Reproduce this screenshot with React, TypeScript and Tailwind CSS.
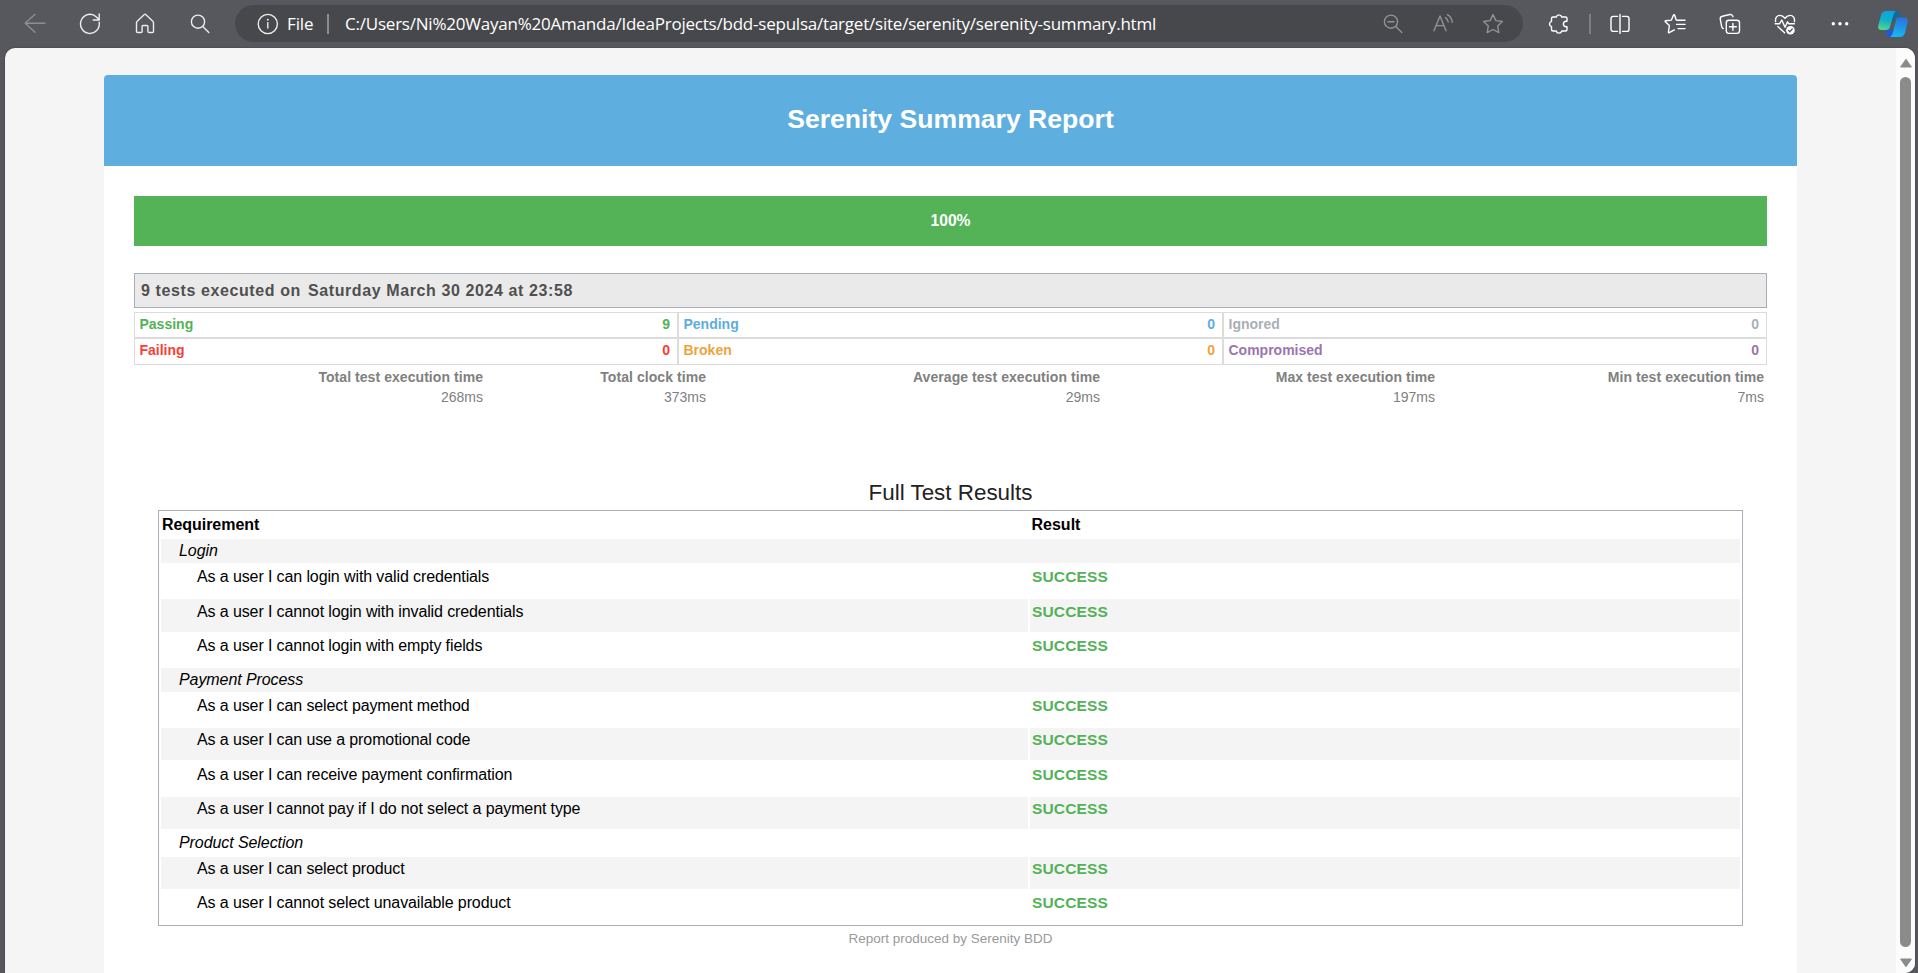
import React from "react";

const ARIAL = "font-['Liberation_Sans',Arial,sans-serif]";

function Icon({ children, className = "" }: { children: React.ReactNode; className?: string }) {
  return (
    <svg
      viewBox="0 0 24 24"
      fill="none"
      stroke="currentColor"
      strokeWidth="1.4"
      strokeLinecap="round"
      strokeLinejoin="round"
      className={`size-6 shrink-0 ${className}`}
    >
      {children}
    </svg>
  );
}

function Toolbar() {
  return (
    <div className="flex h-12 items-center text-[#ececec]">
      <div className="ml-[7px] flex w-[228px] shrink-0 gap-[31px] pl-4">
        <Icon className="text-[#8d8e91]">
          <path d="M22 11.3H2.2M12 2.3l-9.8 9 9.8 9" />
        </Icon>
        <Icon>
          <path d="M21.2 10.2A9.4 9.6 0 1 1 18.4 4.9L21 7.6M21.2 2v6h-6" />
        </Icon>
        <Icon>
          <path d="M11.3 2.6 4.2 9.2a2 2 0 0 0-.7 1.5v8.8a1 1 0 0 0 1 1h3.6a1 1 0 0 0 1-1v-5a1 1 0 0 1 1-1h3.8a1 1 0 0 1 1 1v5a1 1 0 0 0 1 1h3.6a1 1 0 0 0 1-1v-8.8a2 2 0 0 0-.7-1.5L12.7 2.6a1 1 0 0 0-1.4 0Z" />
        </Icon>
        <Icon>
          <circle cx="10" cy="9.7" r="6.6" />
          <path d="m14.8 14.4 6 6" />
        </Icon>
      </div>

      <div className="mb-px flex h-[37px] w-[1288px] shrink-0 items-center rounded-full bg-[#47484b]">
        <Icon className="mt-px ml-[21px]">
          <circle cx="11.8" cy="12" r="9.6" />
          <path d="M11.8 10.6v5.4" />
          <path d="M11.8 7.6v.2" strokeWidth="1.8" />
        </Icon>
        <span className="ml-[7px] w-[40px] font-['Open_Sans','Noto_Sans',sans-serif] text-[17px] leading-6 tracking-[-0.1px] text-white">
          File
        </span>
        <span className="h-5 w-[2px] bg-[#8b8c8e]" />
        <span className="ml-[16px] font-['Open_Sans','Noto_Sans',sans-serif] text-[17px] leading-6 tracking-[-0.22px] whitespace-nowrap text-white">
          C:/Users/Ni%20Wayan%20Amanda/IdeaProjects/bdd-sepulsa/target/site/serenity/serenity-summary.html
        </span>
        <div className="mt-px mr-[18px] ml-auto flex gap-[26px] text-[#919294]">
          <Icon>
            <circle cx="10" cy="9.7" r="6.6" />
            <path d="m14.8 14.4 6 6M7 9.7h6" />
          </Icon>
          <Icon>
            <path d="M3 18.8 9 4l6 14.8M5.2 13.6h7.6M14.4 5.6c1.6 1 2.6 2.5 2.8 4.4M16.4 2.6c2.8 1.6 4.600 4.2 4.8 7.6" />
          </Icon>
          <Icon>
            <path d="m12 2.6 2.9 6 6.5.9-4.7 4.6 1.1 6.5-5.8-3.1-5.8 3.1 1.1-6.5-4.7-4.6 6.5-.9Z" />
          </Icon>
        </div>
      </div>

      <Icon className="ml-[24px] text-white">
        <path d="M6 5h3.2a2.9 2.9 0 0 1 5.6 0H18.5a1.5 1.5 0 0 1 1.5 1.5V9.2h-.8a2.8 2.8 0 0 0 0 5.6H20v2.7a1.5 1.5 0 0 1-1.5 1.5H14.8a2.9 2.9 0 0 1-5.6 0H6a1.5 1.5 0 0 1-1.5-1.5V14.6a2.7 2.7 0 0 1 0-5.2V6.500A1.5 1.5 0 0 1 6 5Z" />
      </Icon>
      <span className="ml-[18px] h-5 w-[2px] shrink-0 bg-[#7d7e82]" />
      <div className="ml-[17px] flex gap-[31px] text-white">
        <Icon>
          <path d="M9.5 4.4H5.2A2.2 2.2 0 0 0 3 6.6v10.6a2.2 2.2 0 0 0 2.2 2.2h4.3M14.5 4.4h4.3A2.2 2.2 0 0 1 21 6.6v10.6a2.2 2.2 0 0 1-2.2 2.2h-4.3M12 2.4v19" />
        </Icon>
        <Icon>
          <path d="M14.6 8.4 13.2 8 11.6 3a.6.6 0 0 0-1.1 0L8.4 8.1l-5.8.6a.6.6 0 0 0-.3 1L6.4 13.6l-1 6.4a.6.6 0 0 0 .9.6l5-2.7M15 8.2h7M13.6 12.4H22M15 16.6h7" />
        </Icon>
        <Icon>
          <rect x="8.3" y="8.2" width="13.2" height="13.2" rx="2.6" />
          <path d="M14.9 11.4v6.8M11.5 14.8h6.8M5.2 16.6a2.6 2.6 0 0 1-1.500-1.9L2.3 7.3A2.6 2.6 0 0 1 4.4 4.3l7.4-1.8a2.6 2.6 0 0 1 3.1 2.3" />
        </Icon>
        <Icon>
          <path d="M2.6 9.6C1.9 6 4 3.4 6.9 3.4c2.2 0 3.7 1 5.1 2.8 1.4-1.8 2.9-2.8 5.1-2.8 2.9 0 5 2.6 4.3 6.2M2.2 11.8h4.3l2.3-3.8 3.2 7.2 2.5-5.4 1.3 2h5.6M4.8 14.6l6.8 6.2" />
          <circle cx="17.4" cy="18.2" r="4.3" fill="currentColor" stroke="none" />
          <path d="m15.5 18.4 1.3 1.3 2.5-2.7" stroke="#55565b" strokeWidth="1.3" />
        </Icon>
        <Icon>
          <g fill="currentColor" stroke="none">
            <circle cx="5.3" cy="11.8" r="1.7" />
            <circle cx="12" cy="11.8" r="1.7" />
            <circle cx="18.7" cy="11.8" r="1.7" />
          </g>
        </Icon>
      </div>
      <svg viewBox="0 0 30 28" className="ml-[26px] h-[28px] w-[30px] shrink-0">
        <defs>
          <linearGradient id="ribbonLeft" x1="0.5" y1="0" x2="0.3" y2="1">
            <stop offset="0" stopColor="#0ba4e0" />
            <stop offset="0.5" stopColor="#12b0c8" />
            <stop offset="1" stopColor="#55d88a" />
          </linearGradient>
          <linearGradient id="ribbonRight" x1="0.6" y1="0" x2="0.4" y2="1">
            <stop offset="0" stopColor="#2a73dc" />
            <stop offset="1" stopColor="#14b9f5" />
          </linearGradient>
        </defs>
        <path d="M14 1h4.5c2 0 2.8 1.2 3.3 2.8L22.8 7H20c-2.2 0-3.2 1.4-3.8 3.4L14 12Z" fill="#0b6c9c" />
        <path d="M7.8 20h6.4l1.2-2-1.4 6.800c-.3 1.2-.8 2-2 2-2.2 0-3-1.2-3.5-2.9Z" fill="#2157dc" />
        <path d="M8.8 1h9.4c-1.6.6-2.3 2-2.8 3.8l-3.3 11.6c-.7 2.3-1.7 3.6-4.3 3.6H3C.5 20-.3 18.2.3 15.6L3 5.2C3.8 2.4 5.6 1 8.8 1Z" fill="url(#ribbonLeft)" />
        <path d="M21.2 7.6h5.6c2.6 0 3.5 1.8 2.8 4.5L27 22.7c-.8 2.8-2.6 4.2-5.5 4.2H12c1.5-.6 2.2-2 2.7-3.8l3-11.5c.6-2.5 1.4-4 3.5-4Z" fill="url(#ribbonRight)" />
      </svg>
    </div>
  );
}

const summary = [
  { label: "Passing", value: 9, color: "text-[#53b257]" },
  { label: "Pending", value: 0, color: "text-[#5eade0]" },
  { label: "Ignored", value: 0, color: "text-[#a9afb7]" },
  { label: "Failing", value: 0, color: "text-[#f93e36]" },
  { label: "Broken", value: 0, color: "text-[#eea33d]" },
  { label: "Compromised", value: 0, color: "text-[#9b76ae]" },
];

const timings = [
  { label: "Total test execution time", value: "268ms", width: "w-[349px]" },
  { label: "Total clock time", value: "373ms", width: "w-[223px]" },
  { label: "Average test execution time", value: "29ms", width: "w-[394px]" },
  { label: "Max test execution time", value: "197ms", width: "w-[335px]" },
  { label: "Min test execution time", value: "7ms", width: "w-[329px]" },
];

type Row = { text: string; group?: boolean; tall?: boolean };

const rows: Row[] = [
  { text: "Login", group: true },
  { text: "As a user I can login with valid credentials" },
  { text: "As a user I cannot login with invalid credentials", tall: true },
  { text: "As a user I cannot login with empty fields" },
  { text: "Payment Process", group: true },
  { text: "As a user I can select payment method" },
  { text: "As a user I can use a promotional code" },
  { text: "As a user I can receive payment confirmation", tall: true },
  { text: "As a user I cannot pay if I do not select a payment type" },
  { text: "Product Selection", group: true },
  { text: "As a user I can select product" },
  { text: "As a user I cannot select unavailable product" },
];

function ResultRow({ row, shaded }: { row: Row; shaded: boolean }) {
  const bg = shaded ? "bg-[#f4f4f4]" : "bg-white";
  if (row.group) {
    return <div className={`h-6 pl-[18px] leading-[23px] tracking-[-0.08px] italic ${bg}`}>{row.text}</div>;
  }
  const height = row.tall ? "h-[33px] leading-[25px]" : "h-8 leading-[23px]";
  return (
    <div className={`flex gap-[2px] ${height}`}>
      <div className={`w-[867px] pl-9 tracking-[-0.11px] ${bg}`}>{row.text}</div>
      <div className={`flex-1 pl-[2px] text-[15.5px] font-bold tracking-[0.15px] text-[#53b257] ${bg}`}>SUCCESS</div>
    </div>
  );
}

function Report() {
  return (
    <div className={`mt-[27px] ml-[99px] flex w-[1693px] shrink-0 flex-col rounded-t bg-white ${ARIAL}`}>
      <h1 className="h-[91px] rounded-t bg-[#5faee0] text-center text-[26.6px] leading-[88px] font-bold text-white">
        Serenity Summary Report
      </h1>
      <div className="px-[30px] pt-[30px]">
        <div className="h-[50px] bg-[#54b257] text-center text-[15.7px] leading-[49px] font-bold text-white">100%</div>
        <div className="mt-[27px] h-[35px] border border-[#abadb6] bg-[#eaeaea] pl-[6px] text-[16px] leading-[33px] font-bold tracking-[0.6px] text-[#505050]">
          <span className="mr-[2px]">9 tests executed on</span> Saturday March 30 2024 at 23:58
        </div>
        <div className="mt-1 grid grid-cols-[544px_545px_544px] grid-rows-[26px_27px] text-[14px] font-bold">
          {summary.map((s) => (
            <div
              key={s.label}
              className={`flex justify-between border border-[#dcdcdc] pr-[7px] pl-[4.5px] leading-[23px] ${s.color}`}
            >
              <span>{s.label}</span>
              <span>{s.value}</span>
            </div>
          ))}
        </div>
        <div className="mt-[2px] flex text-right text-[14px] leading-5 text-[#808080]">
          {timings.map((t) => (
            <div key={t.label} className={`shrink-0 ${t.width}`}>
              <div className="font-bold tracking-[0.06px]">{t.label}</div>
              <div>{t.value}</div>
            </div>
          ))}
        </div>
      </div>

      <h2 className="mt-[71px] text-center text-[22.4px] leading-[30px] text-[#222]">Full Test Results</h2>
      <div className="mx-[54px] mt-[2px] flex h-[416px] flex-col gap-[2px] border border-[#abadb6] p-[2px] text-[16px] text-black">
        <div className="flex h-6 shrink-0 pl-px leading-[23px] font-bold">
          <div className="w-[869.5px] tracking-[-0.05px]">Requirement</div>
          <div>Result</div>
        </div>
        {rows.map((row, i) => (
          <ResultRow key={row.text} row={row} shaded={i % 2 === 0} />
        ))}
      </div>
      <div className="mt-[3px] text-center text-[13.5px] leading-5 text-[#9a9a9a]">Report produced by Serenity BDD</div>
    </div>
  );
}

function Scrollbar() {
  return (
    <div className="ml-auto flex w-[19px] shrink-0 flex-col items-center bg-[#fcfcfc] pt-[10px] pb-[5px]">
      <svg viewBox="0 0 14 10" className="h-[10px] w-[14px] shrink-0">
        <path d="M7 1.2 12.4 9H1.6Z" fill="#8b8b8b" stroke="#8b8b8b" strokeLinejoin="round" />
      </svg>
      <div className="mt-[9px] w-[11px] flex-1 rounded-full bg-[#8b8b8b]" />
      <svg viewBox="0 0 14 10" className="mt-[11px] h-[10px] w-[14px] shrink-0">
        <path d="M7 8.8 12.4 1H1.6Z" fill="#8b8b8b" stroke="#8b8b8b" strokeLinejoin="round" />
      </svg>
    </div>
  );
}

export default function App() {
  return (
    <div className="flex h-[973px] w-[1918px] flex-col overflow-hidden bg-[#57585d]">
      <Toolbar />
      <div className="mr-[3px] ml-[5px] flex h-[925px] overflow-hidden rounded-t-[10px] rounded-br-[10px] bg-[#f5f5f5] shadow-[0_0_2px_#3a3a3f]">
        <Report />
        <Scrollbar />
      </div>
    </div>
  );
}
